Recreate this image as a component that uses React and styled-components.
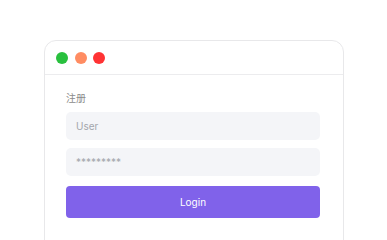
import styled, { createGlobalStyle } from "styled-components";

const GlobalStyle = createGlobalStyle`
    body {
        margin: 0;
        background: #ffffff;
        font-family: Inter, "Noto Sans CJK SC", sans-serif;
    }
`

const Page = styled.div`
    padding: 40px 0 0 44px;
    height: 200px;
    overflow: hidden;
`

const Window = styled.div`
    width: 300px;
    height: 240px;
    box-sizing: border-box;
    border: 1px solid #e8e8ea;
    border-radius: 12px;
    background: #fff;
`

const TitleBar = styled.div`
    height: 33px;
    display: flex;
    align-items: center;
    gap: 6.5px;
    padding-left: 11px;
    border-bottom: 1px solid #ececee;
`

const Dot = styled.span`
    width: 12px;
    height: 12px;
    border-radius: 50%;
    background: ${(p) => p.color};
`

const Form = styled.div`
    display: flex;
    flex-direction: column;
    padding: 16px 23px 0 21px;
`

const Label = styled.div`
    font-family: "Noto Sans CJK SC", sans-serif;
    font-size: 10px;
    line-height: 14px;
    color: #8c8c8c;
    margin-bottom: 7px;
`

const Input = styled.input`
    height: 28px;
    box-sizing: border-box;
    border: none;
    outline: none;
    border-radius: 5px;
    background: #f4f5f8;
    padding: 0 10px;
    font-family: Inter, sans-serif;
    font-size: 10px;
    margin-bottom: ${(p) => p.$gap}px;

    &::placeholder {
        color: #a3a5ab;
    }
`

const Button = styled.button`
    height: 32px;
    border: none;
    border-radius: 4px;
    background: #8062ea;
    color: #fff;
    font-family: Inter, sans-serif;
    font-size: 10px;
`

export default function App() {
    return (
        <>
            <GlobalStyle />
            <Page>
                <Window>
                    <TitleBar>
                        <Dot color="#29c03e" />
                        <Dot color="#ff8c62" />
                        <Dot color="#ff3334" />
                    </TitleBar>
                    <Form>
                        <Label>注册</Label>
                        <Input $gap={8} placeholder="User" />
                        <Input $gap={10} placeholder="*********" />
                        <Button>Login</Button>
                    </Form>
                </Window>
            </Page>
        </>
    )
}
